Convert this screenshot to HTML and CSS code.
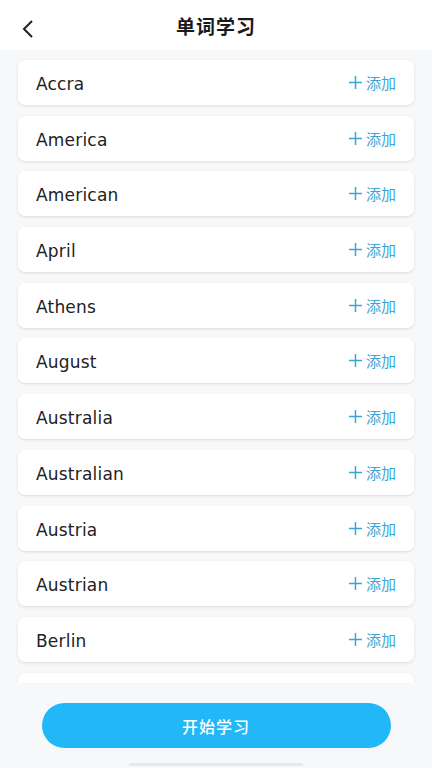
FILE: index.html
```html
<!DOCTYPE html>
<html lang="zh-CN">
<head>
<meta charset="UTF-8" />
<meta name="viewport" content="width=device-width, initial-scale=1" />
<title>单词学习</title>
<link rel="stylesheet" href="styles.css">
</head>
<body>

<div class="header">
  <span class="back">
    <svg width="16" height="20" viewBox="0 0 16 20"><path d="M12 2 L4 10 L12 18" fill="none" stroke="#222" stroke-width="2"/></svg>
  </span>
  <h1>单词学习</h1>
</div>

<div class="word-list">
  <div class="word-card"><span class="word">Accra</span><span class="add"><svg class="plus" viewBox="0 0 14 14"><path d="M7 0V14M0 7H14"/></svg>添加</span></div>
  <div class="word-card"><span class="word">America</span><span class="add"><svg class="plus" viewBox="0 0 14 14"><path d="M7 0V14M0 7H14"/></svg>添加</span></div>
  <div class="word-card"><span class="word">American</span><span class="add"><svg class="plus" viewBox="0 0 14 14"><path d="M7 0V14M0 7H14"/></svg>添加</span></div>
  <div class="word-card"><span class="word">April</span><span class="add"><svg class="plus" viewBox="0 0 14 14"><path d="M7 0V14M0 7H14"/></svg>添加</span></div>
  <div class="word-card"><span class="word">Athens</span><span class="add"><svg class="plus" viewBox="0 0 14 14"><path d="M7 0V14M0 7H14"/></svg>添加</span></div>
  <div class="word-card"><span class="word">August</span><span class="add"><svg class="plus" viewBox="0 0 14 14"><path d="M7 0V14M0 7H14"/></svg>添加</span></div>
  <div class="word-card"><span class="word">Australia</span><span class="add"><svg class="plus" viewBox="0 0 14 14"><path d="M7 0V14M0 7H14"/></svg>添加</span></div>
  <div class="word-card"><span class="word">Australian</span><span class="add"><svg class="plus" viewBox="0 0 14 14"><path d="M7 0V14M0 7H14"/></svg>添加</span></div>
  <div class="word-card"><span class="word">Austria</span><span class="add"><svg class="plus" viewBox="0 0 14 14"><path d="M7 0V14M0 7H14"/></svg>添加</span></div>
  <div class="word-card"><span class="word">Austrian</span><span class="add"><svg class="plus" viewBox="0 0 14 14"><path d="M7 0V14M0 7H14"/></svg>添加</span></div>
  <div class="word-card"><span class="word">Berlin</span><span class="add"><svg class="plus" viewBox="0 0 14 14"><path d="M7 0V14M0 7H14"/></svg>添加</span></div>
  <div class="word-card"></div>
</div>

<div class="footer">
  <button class="start-btn">开始学习</button>
  <div class="home-bar"></div>
</div>

</body>
</html>
```

FILE: styles.css
```css
body {
  margin: 0; background: #f6f8fa; color: #222;
  font-family: "Noto Sans", "Noto Sans CJK SC", sans-serif;
  height: 768px; display: flex; flex-direction: column; overflow: hidden;
}
.header {
  height: 50px; background: white; display: flex; align-items: center; justify-content: center;
  position: relative; flex-shrink: 0;
}
.header h1 {
  margin: 0; font-size: 19px; font-weight: 600; color: #1a1a1a; letter-spacing: 1px;
  font-family: "Noto Sans CJK SC", sans-serif;
}
.back {
  position: absolute; left: 20px; top: 19px; line-height: 0;
}
.word-list {
  height: 633px; overflow: hidden; padding: 10px 18px 0; box-sizing: border-box; flex-shrink: 0;
}
.word-card {
  height: 45px; margin-bottom: 10.7px; background: white; border-radius: 7px;
  box-shadow: 0 1px 3px rgba(0,0,0,0.12);
  display: flex; align-items: center; justify-content: space-between; padding: 0 18px;
}
.word {
  font-size: 17px; color: #222; font-family: "DejaVu Sans", sans-serif; letter-spacing: 0.2px;
  padding-top: 3px;
}
.add {
  font-size: 15px; color: #3aa6d8; font-family: "Noto Sans CJK SC", sans-serif;
  display: flex; align-items: center;
}
.plus {
  width: 13px; height: 13px; margin-right: 4px; stroke: #3aa6d8; stroke-width: 1.6; fill: none;
}
.footer {
  flex: 1; display: flex; flex-direction: column; align-items: center; padding-top: 20px;
}
.start-btn {
  width: 349px; height: 45px; border: none; border-radius: 23px; background: #22b8f7;
  color: white; font-size: 16px; font-weight: 500; letter-spacing: 1px;
  font-family: "Noto Sans CJK SC", sans-serif;
}
.home-bar {
  margin-top: 15px; width: 174px; height: 3px; border-radius: 2px; background: #e6e8ea;
}
```
